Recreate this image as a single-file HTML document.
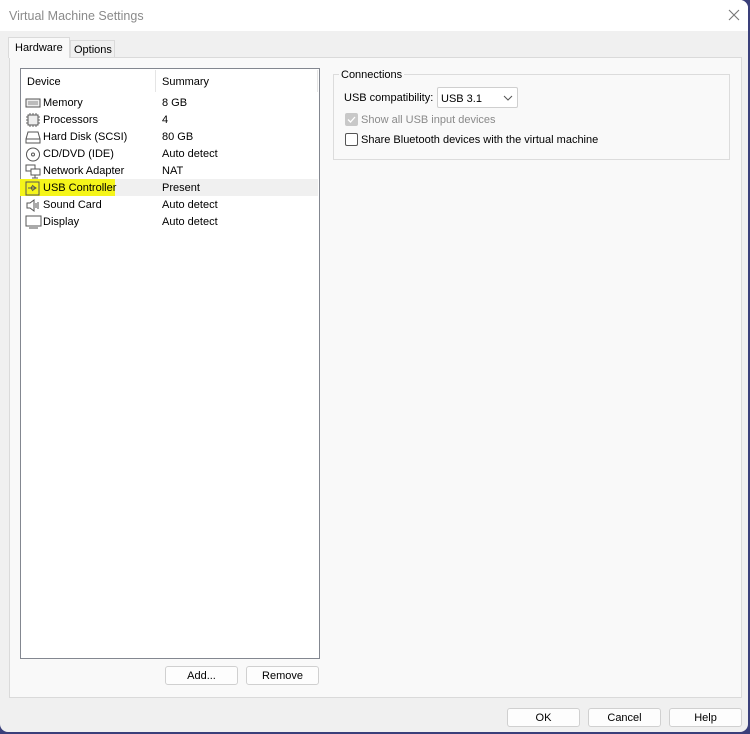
<!DOCTYPE html>
<html><head><style>
*{margin:0;padding:0;box-sizing:border-box}
body{width:750px;height:734px;background:#3a3f7a;font-family:"Liberation Sans",sans-serif;font-size:11px;color:#000;overflow:hidden;position:relative}
.win{position:absolute;left:0;top:0;width:748px;height:732px;background:#f0f0f0;border-radius:0 8px 8px 8px;overflow:hidden}
.title{position:absolute;left:0;top:0;width:748px;height:31px;background:#fff;}
.title span{position:absolute;left:9px;top:9px;font-size:12.5px;color:#8a8a8a}
.x{position:absolute;left:727px;top:8px}
.a{position:absolute}
.btn{position:absolute;height:19px;background:#fdfdfd;border:1px solid #d0d0d0;border-radius:3px;text-align:center;line-height:18px;font-size:11px}
.row{position:absolute;left:21px;width:297px;height:17px;line-height:17px}
.row .n{position:absolute;left:22px}
.row .s{position:absolute;left:141px}
.row svg{position:absolute;left:4px;top:1px}
</style></head><body>
<div class="win">
<div class="title"><span>Virtual Machine Settings</span>
<svg class="x" width="14" height="14" viewBox="0 0 14 14"><path d="M2 2L12 12M12 2L2 12" stroke="#777" stroke-width="1.1"/></svg></div>
<div class="a" style="left:9px;top:57px;width:733px;height:641px;background:#f9f9f9;border:1px solid #dadada"></div>
<div class="a" style="left:8px;top:37px;width:62px;height:21px;background:#f9f9f9;border:1px solid #dadada;border-bottom:none;padding:4px 0 0 6px">Hardware</div>
<div class="a" style="left:70px;top:40px;width:45px;height:17px;background:#f0f0f0;border:1px solid #dadada;border-bottom:none;padding:3px 0 0 3px">Options</div>
<div class="a" style="left:20px;top:68px;width:300px;height:591px;background:#fff;border:1px solid #838790"></div>
<div class="a" style="left:155px;top:70px;width:1px;height:22px;background:#e5e5e5"></div>
<div class="a" style="left:317px;top:70px;width:1px;height:22px;background:#e5e5e5"></div>
<div class="a" style="left:27px;top:76px">Device</div>
<div class="a" style="left:162px;top:76px">Summary</div>
<div class="a" style="left:21px;top:179px;width:297px;height:17px;background:#f0f0f0"></div>
<div class="a" style="left:20px;top:179px;width:95px;height:17px;background:#f5f51a"></div>
<div class="row" style="top:95px"><svg width="16" height="14"><rect x="1" y="3" width="14" height="8" fill="#eee" stroke="#555"/><path d="M3 6h10M3 8h10" stroke="#888"/></svg><span class="n">Memory</span><span class="s">8 GB</span></div>
<div class="row" style="top:112px"><svg width="16" height="14"><rect x="3" y="2" width="10" height="10" fill="#eee" stroke="#555"/><path d="M1 4h2M1 7h2M1 10h2M13 4h2M13 7h2M13 10h2M5 0v2M8 0v2M11 0v2M5 12v2M8 12v2M11 12v2" stroke="#666"/></svg><span class="n">Processors</span><span class="s">4</span></div>
<div class="row" style="top:129px"><svg width="16" height="14"><path d="M3 2h10l2 7v4H1V9z" fill="#fff" stroke="#555"/><path d="M1 9h14" stroke="#555"/></svg><span class="n">Hard Disk (SCSI)</span><span class="s">80 GB</span></div>
<div class="row" style="top:146px"><svg width="16" height="15"><circle cx="8" cy="7.5" r="6.5" fill="#fff" stroke="#555"/><circle cx="8" cy="7.5" r="1.5" fill="none" stroke="#555"/></svg><span class="n">CD/DVD (IDE)</span><span class="s">Auto detect</span></div>
<div class="row" style="top:163px"><svg width="16" height="15"><rect x="1" y="1" width="9" height="6" fill="#fff" stroke="#555"/><rect x="6" y="5" width="9" height="6" fill="#fff" stroke="#555"/><path d="M10 11v3M7 14h6" stroke="#555"/></svg><span class="n">Network Adapter</span><span class="s">NAT</span></div>
<div class="row" style="top:180px"><svg width="16" height="15"><rect x="1" y="1" width="13" height="13" fill="none" stroke="#555"/><path d="M3 7h8M8 5l3 2-3 2M6 7l2-3M6 7l2 3" stroke="#555" fill="none"/></svg><span class="n">USB Controller</span><span class="s">Present</span></div>
<div class="row" style="top:197px"><svg width="16" height="15"><path d="M2 5h3l4-3v11l-4-3H2z" fill="#fff" stroke="#555"/><path d="M11 5v5M13 4v7" stroke="#555"/></svg><span class="n">Sound Card</span><span class="s">Auto detect</span></div>
<div class="row" style="top:214px"><svg width="17" height="15"><rect x="1" y="1" width="15" height="10" fill="#fff" stroke="#555"/><path d="M4 13h9" stroke="#555"/></svg><span class="n">Display</span><span class="s">Auto detect</span></div>
<div class="btn" style="left:165px;top:666px;width:73px">Add...</div>
<div class="btn" style="left:246px;top:666px;width:73px">Remove</div>
<div class="a" style="left:333px;top:74px;width:397px;height:86px;border:1px solid #dcdcdc"></div>
<div class="a" style="left:339px;top:69px;background:#f9f9f9;padding:0 2px">Connections</div>
<div class="a" style="left:344px;top:92px">USB compatibility:</div>
<div class="a" style="left:437px;top:87px;width:81px;height:21px;background:#fff;border:1px solid #cfcfcf;border-radius:2px;padding:5px 0 0 3px">USB 3.1<svg style="position:absolute;right:4px;top:7px" width="10" height="6"><path d="M1 1l4 4 4-4" stroke="#555" fill="none"/></svg></div>
<div class="a" style="left:345px;top:113px;width:13px;height:13px;background:#c8c8c8;border-radius:2px"><svg width="13" height="13"><path d="M3 6.5l2.5 2.5 4.5-5" stroke="#fff" stroke-width="1.3" fill="none"/></svg></div>
<div class="a" style="left:361px;top:114px;color:#8a8a8a">Show all USB input devices</div>
<div class="a" style="left:345px;top:133px;width:13px;height:13px;background:#fff;border:1px solid #555;border-radius:2px"></div>
<div class="a" style="left:361px;top:134px">Share Bluetooth devices with the virtual machine</div>
<div class="btn" style="left:507px;top:708px;width:73px">OK</div>
<div class="btn" style="left:588px;top:708px;width:73px">Cancel</div>
<div class="btn" style="left:669px;top:708px;width:73px">Help</div>
</div>
</body></html>
